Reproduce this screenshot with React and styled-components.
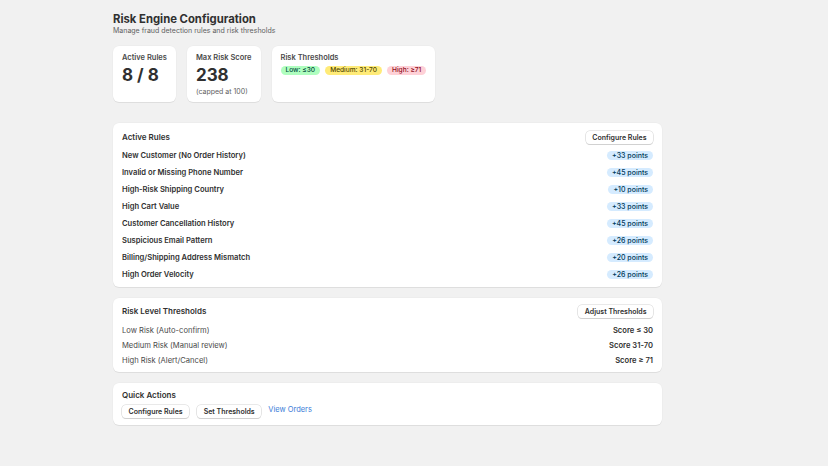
import React from "react";
import styled, { createGlobalStyle } from "styled-components";

const GlobalStyle = createGlobalStyle`
  html, body {
    margin: 0;
    padding: 0;
    background: #f1f1f1;
  }
  body {
    font-family: Inter, "Noto Sans", "Liberation Sans", sans-serif;
    color: #303030;
    -webkit-font-smoothing: antialiased;
  }
`;

const Page = styled.div`
  min-height: 466px;
  box-sizing: border-box;
  padding: 12.5px 0 0 113px;
`;

const Content = styled.div`
  width: 549px;
`;

const Title = styled.h1`
  margin: 0;
  font-size: 11.3px;
  line-height: 13px;
  font-weight: 700;
  color: #303030;
`;

const Subtitle = styled.p`
  margin: 0;
  font-size: 7px;
  line-height: 10px;
  color: #616161;
`;

const StatsRow = styled.div`
  display: flex;
  align-items: stretch;
  gap: 11px;
  margin-top: 10.5px;
`;

const StatCard = styled.div`
  background: #fff;
  border-radius: 6px;
  box-shadow: 0 1px 0 rgba(26, 26, 26, 0.07), 0 0 0 0.5px rgba(0, 0, 0, 0.03);
  padding: 7px 9px 6px;
  height: 56px;
  box-sizing: border-box;
`;

const StatLabel = styled.div`
  font-size: 7.5px;
  line-height: 9px;
  font-weight: 600;
  color: #4a4a4a;
`;

const StatValue = styled.div`
  margin-top: 3px;
  font-size: 17px;
  line-height: 20px;
  font-weight: 700;
  color: #303030;
`;

const StatNote = styled.div`
  margin-top: 2px;
  font-size: 7px;
  line-height: 9px;
  color: #616161;
`;

const BadgeRow = styled.div`
  display: flex;
  gap: 5px;
  margin-top: 4px;
`;

const tones = {
  success: { bg: "#affebf", fg: "#014b40" },
  warning: { bg: "#ffeb78", fg: "#4f4700" },
  critical: { bg: "#fed1d7", fg: "#8e0b21" },
  info: { bg: "#d5ebff", fg: "#003a5a" },
};

const Badge = styled.span`
  display: inline-flex;
  align-items: center;
  height: 9px;
  padding: 0 5px;
  border-radius: 5px;
  font-size: ${(props) => props.size || "7px"};
  line-height: 9px;
  font-weight: 500;
  white-space: nowrap;
  background: ${(props) => tones[props.tone].bg};
  color: ${(props) => tones[props.tone].fg};
`;

const Sections = styled.div`
  display: flex;
  flex-direction: column;
  gap: 11px;
  margin-top: 21px;
`;

const Card = styled.section`
  background: #fff;
  border-radius: 6px;
  box-shadow: 0 1px 0 rgba(26, 26, 26, 0.07), 0 0 0 0.5px rgba(0, 0, 0, 0.03);
  padding: ${(props) => props.pad || "8px 9px"};
`;

const CardHeader = styled.div`
  display: flex;
  align-items: center;
  justify-content: space-between;
  min-height: 13px;
`;

const CardTitle = styled.h2`
  margin: 0;
  font-size: 8px;
  line-height: 9px;
  font-weight: 600;
  color: #303030;
`;

const Button = styled.button`
  display: inline-flex;
  align-items: center;
  height: 13px;
  padding: 0 6.5px;
  border: 0;
  border-radius: 4px;
  background: #fff;
  box-shadow: 0 0 0 0.6px #d4d4d4, 0 1px 0 #cfcfcf;
  font-family: inherit;
  font-size: 7px;
  font-weight: 600;
  color: #303030;
  cursor: pointer;
`;

const List = styled.div`
  display: flex;
  flex-direction: column;
  gap: ${(props) => props.gap};
  margin-top: ${(props) => props.top};
`;

const Row = styled.div`
  display: flex;
  align-items: center;
  justify-content: space-between;
  height: 9px;
`;

const RowText = styled.span`
  font-size: 7.6px;
  line-height: 9px;
  font-weight: ${(props) => (props.bold ? 600 : 400)};
  color: ${(props) => (props.bold ? "#303030" : "#4a4a4a")};
`;

const Actions = styled.div`
  display: flex;
  align-items: center;
  gap: 8px;
  margin-top: 5px;
`;

const Link = styled.a`
  font-size: 7.5px;
  line-height: 9px;
  color: #3b7dd8;
  text-decoration: none;
  margin: -3px 0 0 -1px;
`;

const rules = [
  ["New Customer (No Order History)", 33],
  ["Invalid or Missing Phone Number", 45],
  ["High-Risk Shipping Country", 10],
  ["High Cart Value", 33],
  ["Customer Cancellation History", 45],
  ["Suspicious Email Pattern", 26],
  ["Billing/Shipping Address Mismatch", 20],
  ["High Order Velocity", 26],
];

const thresholds = [
  ["Low Risk (Auto-confirm)", "Score ≤ 30"],
  ["Medium Risk (Manual review)", "Score 31-70"],
  ["High Risk (Alert/Cancel)", "Score ≥ 71"],
];

export default function App() {
  return (
    <Page>
      <GlobalStyle />
      <Content>
        <Title>Risk Engine Configuration</Title>
        <Subtitle>Manage fraud detection rules and risk thresholds</Subtitle>

        <StatsRow>
          <StatCard>
            <StatLabel>Active Rules</StatLabel>
            <StatValue>8 / 8</StatValue>
          </StatCard>
          <StatCard>
            <StatLabel>Max Risk Score</StatLabel>
            <StatValue>238</StatValue>
            <StatNote>(capped at 100)</StatNote>
          </StatCard>
          <StatCard>
            <StatLabel>Risk Thresholds</StatLabel>
            <BadgeRow>
              <Badge tone="success" size="6.6px">Low: ≤30</Badge>
              <Badge tone="warning" size="6.6px">Medium: 31-70</Badge>
              <Badge tone="critical" size="6.6px">High: ≥71</Badge>
            </BadgeRow>
          </StatCard>
        </StatsRow>

        <Sections>
          <Card pad="8px 9px 8.5px">
            <CardHeader>
              <CardTitle>Active Rules</CardTitle>
              <Button>Configure Rules</Button>
            </CardHeader>
            <List gap="8px" top="6.5px">
              {rules.map(([name, pts]) => (
                <Row key={name}>
                  <RowText bold>{name}</RowText>
                  <Badge tone="info">+{pts} points</Badge>
                </Row>
              ))}
            </List>
          </Card>

          <Card pad="7px 9px 7.5px">
            <CardHeader>
              <CardTitle>Risk Level Thresholds</CardTitle>
              <Button>Adjust Thresholds</Button>
            </CardHeader>
            <List gap="6px" top="7.5px">
              {thresholds.map(([label, score]) => (
                <Row key={label}>
                  <RowText>{label}</RowText>
                  <RowText bold>{score}</RowText>
                </Row>
              ))}
            </List>
          </Card>

          <Card pad="7.5px 9px 7px">
            <CardTitle>Quick Actions</CardTitle>
            <Actions>
              <Button>Configure Rules</Button>
              <Button>Set Thresholds</Button>
              <Link href="#">View Orders</Link>
            </Actions>
          </Card>
        </Sections>
      </Content>
    </Page>
  );
}
